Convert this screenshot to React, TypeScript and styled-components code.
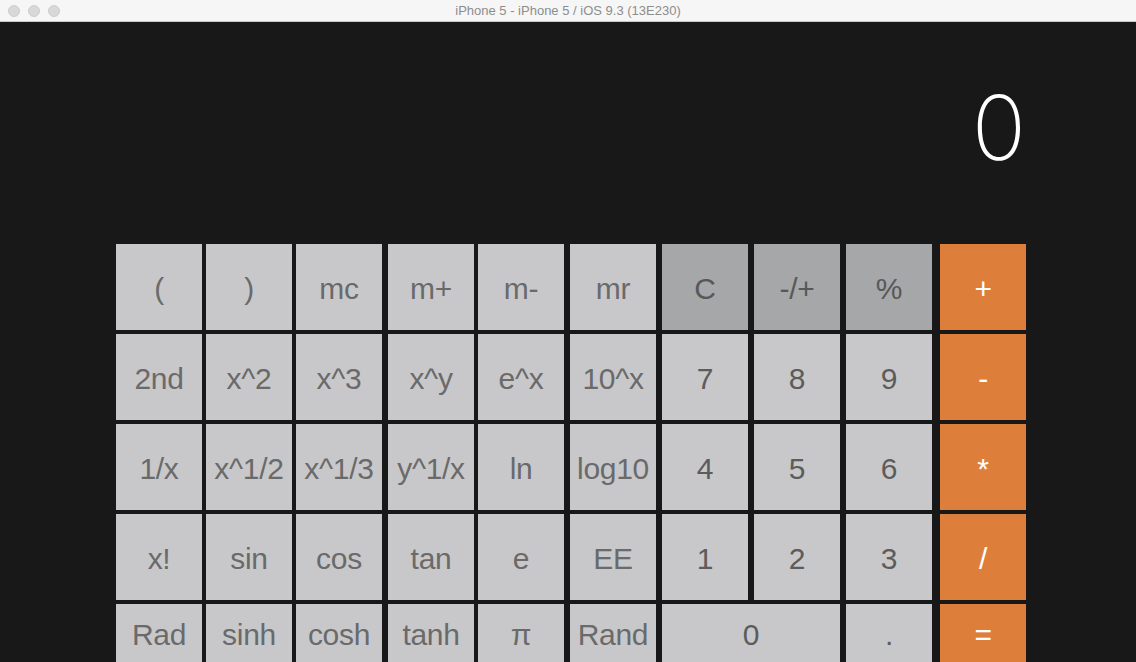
import React from "react";
import styled, { createGlobalStyle } from "styled-components";

const Global = createGlobalStyle`
  html, body { margin: 0; padding: 0; height: 662px; overflow: hidden; background: #181818; }
  #root { height: 662px; }
`;

const Window = styled.div`
  display: flex;
  flex-direction: column;
  width: 1136px;
  height: 662px;
  background: #181818;
  overflow: hidden;
`;

const TitleBar = styled.div`
  position: relative;
  height: 21px;
  flex: 0 0 21px;
  background: #f6f6f6;
  border-bottom: 1px solid #c9c9c9;
  display: flex;
  align-items: center;
  justify-content: center;
  font-family: "Liberation Sans", Arial, sans-serif;
  font-size: 13px;
  color: #8d8d8d;
`;

const Lights = styled.div`
  position: absolute;
  left: 8px;
  top: 5px;
  display: flex;
  gap: 8px;
`;

const Light = styled.span`
  width: 12px;
  height: 12px;
  box-sizing: border-box;
  border-radius: 50%;
  background: #d8d8d8;
  border: 1px solid #cdcdcd;
`;

const Main = styled.div`
  display: flex;
  flex-direction: column;
  padding-left: 116px;
  width: 910px;
`;

const Display = styled.div`
  height: 161px;
  padding-top: 61px;
  margin-right: 0;
  text-align: right;
  font-family: Inter, Roboto, "Liberation Sans", sans-serif;
  font-weight: 250;
  font-size: 90px;
  line-height: 90px;
  color: #ffffff;
`;

const Grid = styled.div`
  display: grid;
  grid-template-columns: 90px 90px 92px 90px 92px 92px 92px 92px 94px 86px;
  grid-template-rows: 86px 86px 86px 86px 58px;
  row-gap: 4px;
`;

type Kind = "fn" | "num" | "ctrl" | "op";

const bg: Record<Kind, string> = {
  fn: "#c8c8ca",
  num: "#c8c8ca",
  ctrl: "#a6a7a9",
  op: "#dd7f3b",
};
const fg: Record<Kind, string> = {
  fn: "#6a6a6a",
  num: "#5c5c5c",
  ctrl: "#585858",
  op: "#ffffff",
};

const Key = styled.div<{ $kind: Kind; $span?: number }>`
  grid-column: span ${(p) => p.$span ?? 1};
  width: ${(p) => (p.$span === 2 ? 178 : 86)}px;
  background: ${(p) => bg[p.$kind]};
  color: ${(p) => fg[p.$kind]};
  display: flex;
  align-items: center;
  justify-content: center;
  font-family: "Liberation Sans", Arial, sans-serif;
  font-size: 30px;
  padding-top: 3px;
  box-sizing: border-box;
  white-space: nowrap;
  letter-spacing: -0.3px;
`;

type K = { l: string; k: Kind; s?: number };

const rows: K[][] = [
  [
    { l: "(", k: "fn" }, { l: ")", k: "fn" }, { l: "mc", k: "fn" }, { l: "m+", k: "fn" },
    { l: "m-", k: "fn" }, { l: "mr", k: "fn" }, { l: "C", k: "ctrl" }, { l: "-/+", k: "ctrl" },
    { l: "%", k: "ctrl" }, { l: "+", k: "op" },
  ],
  [
    { l: "2nd", k: "fn" }, { l: "x^2", k: "fn" }, { l: "x^3", k: "fn" }, { l: "x^y", k: "fn" },
    { l: "e^x", k: "fn" }, { l: "10^x", k: "fn" }, { l: "7", k: "num" }, { l: "8", k: "num" },
    { l: "9", k: "num" }, { l: "-", k: "op" },
  ],
  [
    { l: "1/x", k: "fn" }, { l: "x^1/2", k: "fn" }, { l: "x^1/3", k: "fn" }, { l: "y^1/x", k: "fn" },
    { l: "ln", k: "fn" }, { l: "log10", k: "fn" }, { l: "4", k: "num" }, { l: "5", k: "num" },
    { l: "6", k: "num" }, { l: "*", k: "op" },
  ],
  [
    { l: "x!", k: "fn" }, { l: "sin", k: "fn" }, { l: "cos", k: "fn" }, { l: "tan", k: "fn" },
    { l: "e", k: "fn" }, { l: "EE", k: "fn" }, { l: "1", k: "num" }, { l: "2", k: "num" },
    { l: "3", k: "num" }, { l: "/", k: "op" },
  ],
  [
    { l: "Rad", k: "fn" }, { l: "sinh", k: "fn" }, { l: "cosh", k: "fn" }, { l: "tanh", k: "fn" },
    { l: "π", k: "fn" }, { l: "Rand", k: "fn" }, { l: "0", k: "num", s: 2 },
    { l: ".", k: "num" }, { l: "=", k: "op" },
  ],
];

export default function App() {
  return (
    <Window>
      <Global />
      <TitleBar>
        <Lights>
          <Light />
          <Light />
          <Light />
        </Lights>
        iPhone 5 - iPhone 5 / iOS 9.3 (13E230)
      </TitleBar>
      <Main>
        <Display>0</Display>
        <Grid>
          {rows.flat().map((b, i) => (
            <Key key={i} $kind={b.k} $span={b.s}>
              {b.l}
            </Key>
          ))}
        </Grid>
      </Main>
    </Window>
  );
}
